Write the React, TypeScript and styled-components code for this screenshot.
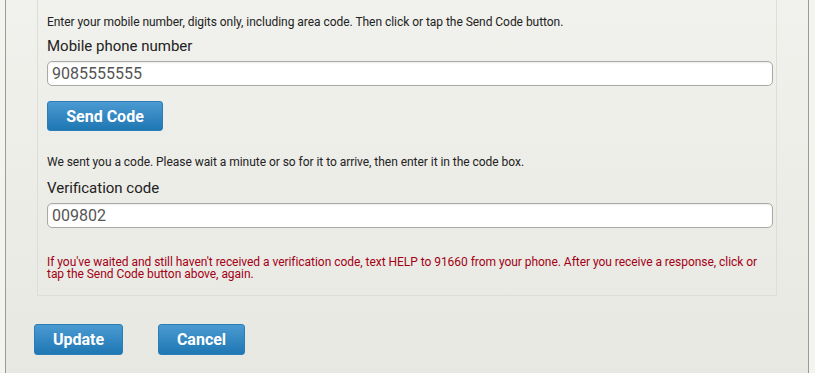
import React, { useState } from 'react';
import styled, { createGlobalStyle } from 'styled-components';

const GlobalStyle = createGlobalStyle`
  html, body {
    margin: 0;
    padding: 0;
    background: #f3f3f0;
    font-family: Roboto, 'Liberation Sans', Arial, sans-serif;
    color: #222;
    overflow: hidden;
  }
`;

const Page = styled.div`
  padding-left: 5px;
  width: 804px;
`;

const Panel = styled.div`
  margin-top: -10px;
  height: 383px;
  box-sizing: border-box;
  border-left: 1px solid #9c9c96;
  border-right: 1px solid #9c9c96;
  background: linear-gradient(to bottom, #f1f1ed 0%, #e8e8e3 100%);
  padding: 0 31px 0 28px;
`;

const InnerBox = styled.div`
  margin-left: 3px;
  border: 1px solid #deded9;
  padding: 24px 3px 15px 9px;
`;

const Hint = styled.p<{ $gap?: number }>`
  margin: ${p => p.$gap ?? 0}px 0 0;
  font-size: 12px;
  line-height: 14px;
  letter-spacing: -0.04px;
  color: #222;
`;

const Label = styled.label<{ $gap: number }>`
  display: block;
  margin: ${p => p.$gap}px 0 6px;
  font-size: 15px;
  line-height: 18px;
  color: #222;
`;

const TextInput = styled.input`
  display: block;
  box-sizing: border-box;
  width: 100%;
  height: 25px;
  margin: 0;
  padding: 0 4px;
  border: 1px solid #a9a9a6;
  border-radius: 5px;
  background: #fff;
  box-shadow: inset 0 1px 2px rgba(0, 0, 0, 0.08);
  font-family: Roboto, 'Liberation Sans', Arial, sans-serif;
  font-size: 16px;
  color: #555;
  outline: none;
  caret-color: #222;
`;

const BlueButton = styled.button<{ $width: number; $height: number }>`
  display: inline-flex;
  align-items: center;
  justify-content: center;
  box-sizing: border-box;
  width: ${p => p.$width}px;
  height: ${p => p.$height}px;
  padding: 0;
  border: 1px solid #2a7db5;
  border-radius: 3px;
  background: linear-gradient(to bottom, #4b9ad2 0%, #1e77b3 100%);
  color: #fff;
  font-family: Roboto, 'Liberation Sans', Arial, sans-serif;
  font-size: 16px;
  font-weight: 700;
  cursor: pointer;
`;

const SendRow = styled.div`
  margin-top: 15px;
`;

const Warning = styled.p`
  margin: 28px 0 0;
  font-size: 12px;
  line-height: 12px;
  letter-spacing: -0.04px;
  color: #a30014;
`;

const Actions = styled.div`
  display: flex;
  gap: 35px;
  margin-top: 28px;
`;

export default function App() {
  const [phone, setPhone] = useState('9085555555');
  const [code, setCode] = useState('009802');

  return (
    <>
      <GlobalStyle />
      <Page>
        <Panel>
          <InnerBox>
            <Hint>
              Enter your mobile number, digits only, including area code. Then click or tap the Send Code button.
            </Hint>
            <Label $gap={8} htmlFor="phone">Mobile phone number</Label>
            <TextInput
              id="phone"
              autoFocus
              value={phone}
              onChange={e => setPhone(e.target.value)}
            />
            <SendRow>
              <BlueButton $width={116} $height={30}>Send Code</BlueButton>
            </SendRow>

            <Hint $gap={24}>
              We sent you a code. Please wait a minute or so for it to arrive, then enter it in the code box.
            </Hint>
            <Label $gap={10} htmlFor="code">Verification code</Label>
            <TextInput id="code" value={code} onChange={e => setCode(e.target.value)} />

            <Warning>
              If you've waited and still haven't received a verification code, text HELP to 91660 from your phone. After you receive a response, click or tap the Send Code button above, again.
            </Warning>
          </InnerBox>

          <Actions>
            <BlueButton $width={89} $height={31}>Update</BlueButton>
            <BlueButton $width={87} $height={31}>Cancel</BlueButton>
          </Actions>
        </Panel>
      </Page>
    </>
  );
}
